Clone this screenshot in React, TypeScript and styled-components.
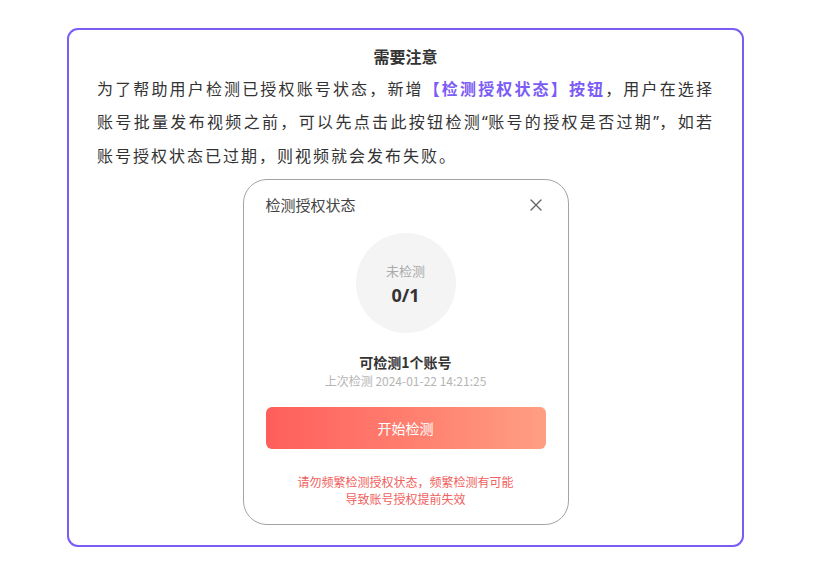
import React from "react";
import styled, { createGlobalStyle } from "styled-components";

const Global = createGlobalStyle`
  html, body { margin: 0; padding: 0; background: #ffffff; }
  body { font-family: "Noto Sans CJK SC", "Noto Sans", sans-serif; color: #333; }
`;

const Page = styled.div`
  padding: 28px 0 0 67px;
`;

const Notice = styled.section`
  box-sizing: border-box;
  width: 677px;
  height: 519px;
  border: 2px solid #7b5cf5;
  border-radius: 11px;
  padding: 14px 28px 0;
  display: flex;
  flex-direction: column;
  align-items: stretch;
`;

const Title = styled.h2`
  margin: 0;
  font-size: 16px;
  line-height: 24px;
  font-weight: 700;
  text-align: center;
  color: #333;
`;

const Paragraph = styled.p`
  margin: 4px 0 0;
  font-size: 16px;
  line-height: 33px;
  letter-spacing: 2px;
  text-align: justify;
  color: #333;
`;

const Quote = styled.span`
  font-family: "Noto Sans", sans-serif;
  letter-spacing: 0;
`;

const Highlight = styled.span`
  color: #7b5cf5;
  font-weight: 700;
`;

const Card = styled.div`
  box-sizing: border-box;
  align-self: center;
  margin-top: 7px;
  width: 326px;
  height: 346px;
  border: 1px solid #a3a3a3;
  border-radius: 24px;
  padding: 14px 22px 0;
  display: flex;
  flex-direction: column;
  align-items: center;
`;

const CardHeader = styled.div`
  align-self: stretch;
  display: flex;
  justify-content: space-between;
  align-items: center;
  height: 22px;
`;

const CardTitle = styled.span`
  font-size: 15px;
  line-height: 22px;
  color: #444;
`;

const Close = styled.button`
  border: 0;
  background: none;
  padding: 0;
  margin-right: 2px;
  width: 16px;
  height: 16px;
  display: flex;
  align-items: center;
  justify-content: center;
  cursor: pointer;
`;

const Circle = styled.div`
  margin-top: 17px;
  width: 100px;
  height: 100px;
  border-radius: 50%;
  background: #f4f4f4;
  display: flex;
  flex-direction: column;
  align-items: center;
  justify-content: center;
`;

const CircleLabel = styled.span`
  font-size: 13px;
  line-height: 18px;
  color: #aaa;
  margin-top: 2px;
`;

const CircleCount = styled.span`
  font-family: "Noto Sans", "Noto Sans CJK SC", sans-serif;
  font-size: 18px;
  line-height: 24px;
  font-weight: 700;
  color: #333;
  margin-top: 3px;
`;

const Count = styled.div`
  margin-top: 19px;
  font-size: 14px;
  line-height: 20px;
  font-weight: 700;
  color: #333;
`;

const LastCheck = styled.div`
  font-size: 12px;
  line-height: 18px;
  color: #b5b5b5;
`;

const StartButton = styled.button`
  margin-top: 17px;
  align-self: stretch;
  height: 42px;
  border: 0;
  border-radius: 6px;
  background: linear-gradient(90deg, #ff5e5b 0%, #ff9e82 100%);
  color: #fff;
  font-family: "Noto Sans CJK SC", sans-serif;
  font-size: 14px;
  cursor: pointer;
`;

const Warning = styled.p`
  margin: 24px 0 0;
  font-size: 12px;
  line-height: 17px;
  color: #f0605c;
  text-align: center;
`;

export default function App() {
  return (
    <>
      <Global />
      <Page>
        <Notice>
          <Title>需要注意</Title>
          <Paragraph>
            为了帮助用户检测已授权账号状态，新增<Highlight>【检测授权状态】按钮</Highlight>，用户在选择账号批量发布视频之前，可以先点击此按钮检测<Quote>“</Quote>账号的授权是否过期<Quote>”</Quote>，如若账号授权状态已过期，则视频就会发布失败。
          </Paragraph>
          <Card>
            <CardHeader>
              <CardTitle>检测授权状态</CardTitle>
              <Close aria-label="关闭">
                <svg width="12" height="12" viewBox="0 0 12 12">
                  <path d="M1 1 L11 11 M11 1 L1 11" stroke="#666" strokeWidth="1.4" strokeLinecap="round" />
                </svg>
              </Close>
            </CardHeader>
            <Circle>
              <CircleLabel>未检测</CircleLabel>
              <CircleCount>0/1</CircleCount>
            </Circle>
            <Count>可检测1个账号</Count>
            <LastCheck>上次检测 2024-01-22 14:21:25</LastCheck>
            <StartButton>开始检测</StartButton>
            <Warning>
              请勿频繁检测授权状态，频繁检测有可能
              <br />
              导致账号授权提前失效
            </Warning>
          </Card>
        </Notice>
      </Page>
    </>
  );
}
